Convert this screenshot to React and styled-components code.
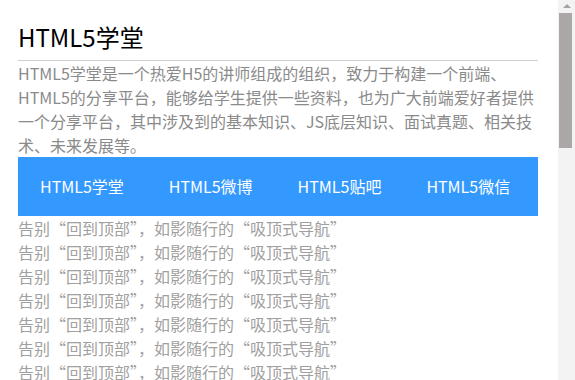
import React from "react";
import styled, { createGlobalStyle } from "styled-components";

const GlobalStyle = createGlobalStyle`
  html, body {
    margin: 0;
    padding: 0;
    background: #fff;
    overflow: hidden;
  }
  body {
    font-family: "Microsoft YaHei", "Noto Sans CJK SC", sans-serif;
  }
`;

const navItems = ["HTML5学堂", "HTML5微博", "HTML5贴吧", "HTML5微信"];
const rows = Array.from({ length: 7 }, (_, i) => i);

export default function App() {
  return (
    <>
      <GlobalStyle />
      <Page>
        <Main>
          <Wrapper>
            <Title>HTML5学堂</Title>
            <Intro>
              HTML5学堂是一个热爱H5的讲师组成的组织，致力于构建一个前端、HTML5的分享平台，能够给学生提供一些资料，也为广大前端爱好者提供一个分享平台，其中涉及到的基本知识、JS底层知识、面试真题、相关技术、未来发展等。
            </Intro>
            <Nav>
              {navItems.map((item) => (
                <NavItem key={item}>{item}</NavItem>
              ))}
            </Nav>
            <List>
              {rows.map((i) => (
                <Row key={i}>告别“回到顶部”，如影随行的“吸顶式导航”</Row>
              ))}
            </List>
          </Wrapper>
        </Main>
        <ScrollBar>
          <ArrowUp />
          <Thumb />
        </ScrollBar>
      </Page>
    </>
  );
}

const Page = styled.div`
  display: flex;
  height: 380px;
  overflow: hidden;
`;

const Main = styled.div`
  flex: 1;
  overflow: hidden;
`;

const Wrapper = styled.div`
  width: 520px;
  margin-left: 18px;
`;

const Title = styled.h1`
  margin: 24px 0 0;
  padding-bottom: 10px;
  font-size: 24px;
  line-height: 26px;
  font-weight: normal;
  color: #000;
  border-bottom: 1px solid #cfcfcf;
`;

const Intro = styled.p`
  margin: 0;
  font-size: 16px;
  line-height: 24px;
  color: #8a8a8a;
`;

const Nav = styled.ul`
  display: flex;
  margin: 0;
  padding: 0;
  list-style: none;
  height: 59px;
  background: #3399ff;
`;

const NavItem = styled.li`
  padding: 0 23px 0 22px;
  line-height: 59px;
  font-size: 16px;
  color: #fff;
  white-space: nowrap;
`;

const List = styled.div`
  font-size: 16px;
  line-height: 24px;
  color: #a0a0a0;
`;

const Row = styled.div`
  white-space: nowrap;
`;

const ScrollBar = styled.div`
  width: 17px;
  flex-shrink: 0;
  background: #f3f3f3;
  display: flex;
  flex-direction: column;
  align-items: center;
  padding-top: 4px;
  box-sizing: border-box;
`;

const ArrowUp = styled.div`
  width: 0;
  height: 0;
  border-left: 4px solid transparent;
  border-right: 4px solid transparent;
  border-bottom: 4px solid #a3a3a3;
  margin-bottom: 5px;
`;

const Thumb = styled.div`
  width: 13px;
  height: 135px;
  margin-right: 2px;
  background: #aca7a7;
`;
